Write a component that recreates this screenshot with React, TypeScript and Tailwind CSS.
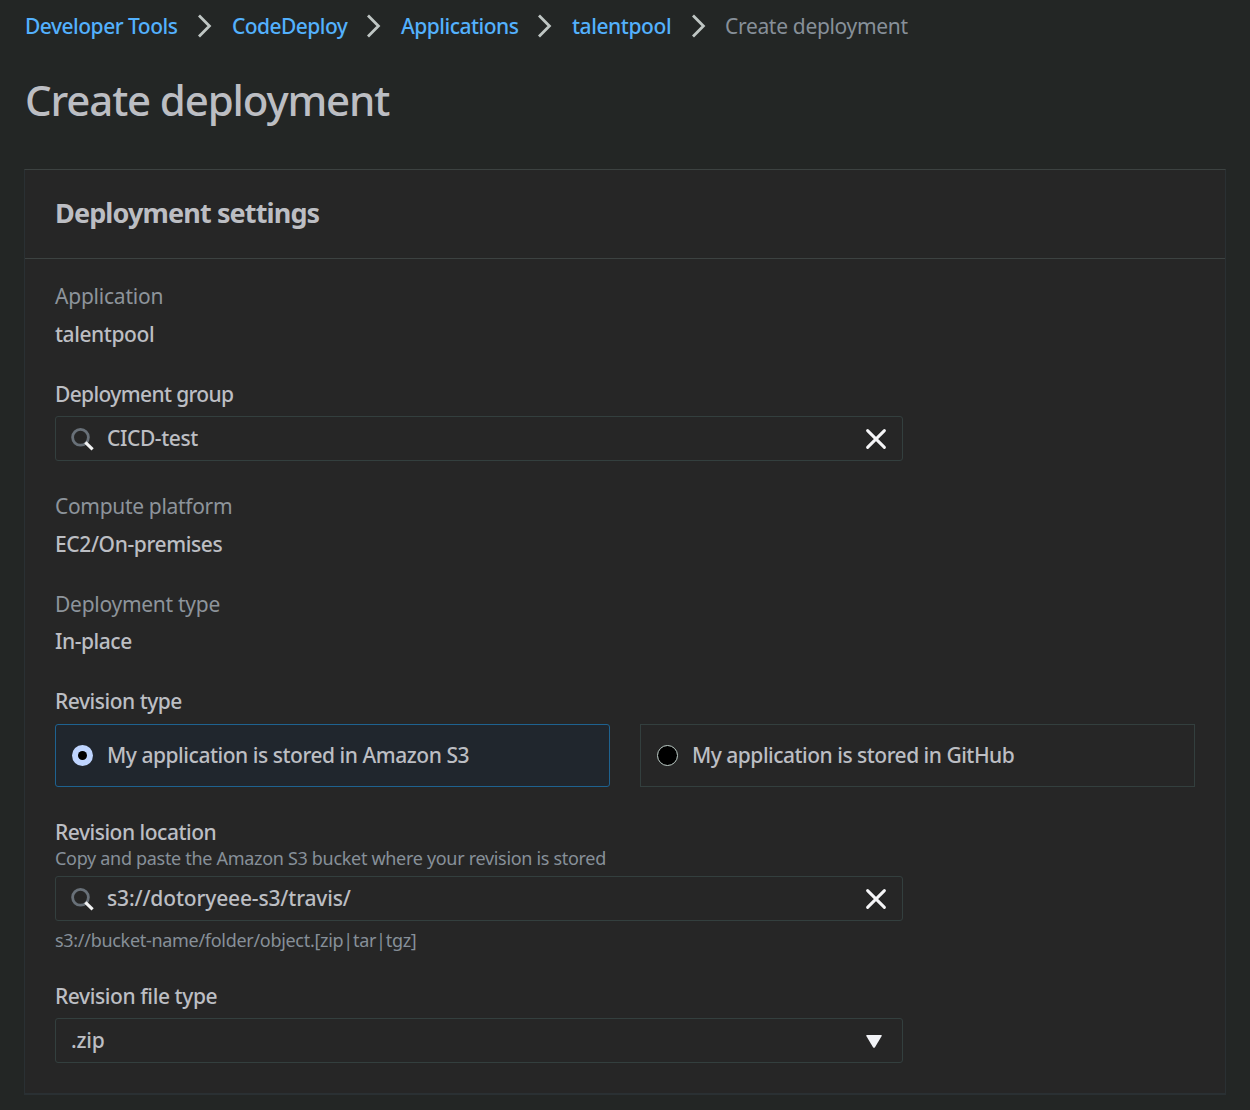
import type { ReactNode } from "react";

function Chevron() {
  return (
    <svg width="16" height="24" viewBox="0 0 16 24" className="shrink-0" fill="none" stroke="#bfc6c4" strokeWidth="2.8">
      <path d="M2 1.6 12.4 12 2 22.4" />
    </svg>
  );
}

function Crumb({ text, className }: { text: string; className: string }) {
  return (
    <li className="mr-[18px] flex items-center">
      <a className={"block shrink-0 whitespace-nowrap pl-px font-medium text-[#53b1fd] " + className}>{text}</a>
      <Chevron />
    </li>
  );
}

function SearchIcon() {
  return (
    <svg width="24" height="24" viewBox="0 0 24 24" className="ml-[15px] shrink-0" fill="none">
      <circle cx="9.5" cy="10.3" r="7.9" stroke="#687078" strokeWidth="2.8" />
      <path d="M14.4 15.4 21.6 22.4" stroke="#f2f3f3" strokeWidth="3.2" />
    </svg>
  );
}

function CloseIcon() {
  return (
    <svg width="22" height="22" viewBox="0 0 22 22" className="mr-[15px] shrink-0" fill="none" stroke="#f5f5f7" strokeWidth="3" strokeLinecap="round">
      <path d="M2.6 2.6 19.4 19.4M19.4 2.6 2.6 19.4" />
    </svg>
  );
}

function Muted({ children, className }: { children: ReactNode; className: string }) {
  return <dt className={"text-[#8d949b] " + className}>{children}</dt>;
}

function Label({ children, className }: { children: ReactNode; className: string }) {
  return <label className={"block font-medium text-[#bcbec3] " + className}>{children}</label>;
}

function SearchInput({ value, className }: { value: string; className: string }) {
  return (
    <div className="flex h-[45px] w-[848px] items-center rounded-[3px] border border-[#333f3e]">
      <SearchIcon />
      <span className={"mb-px ml-3 grow whitespace-nowrap font-medium text-[#bcbec3] " + className}>{value}</span>
      <CloseIcon />
    </div>
  );
}

export default function App() {
  return (
    <main className="h-[1110px] w-[1250px] overflow-hidden bg-[#232625] px-6 pt-[11px] font-['Noto_Sans',sans-serif] text-[21px] leading-[30px]">
      <nav>
        <ol className="flex h-[30px]">
          <Crumb text="Developer Tools" className="w-[173px] tracking-[-0.5px]" />
          <Crumb text="CodeDeploy" className="w-[135px] tracking-[-0.55px]" />
          <Crumb text="Applications" className="w-[137px] tracking-[-0.5px]" />
          <Crumb text="talentpool" className="w-[120px] tracking-[-0.42px]" />
          <li className="whitespace-nowrap tracking-[-0.32px] text-[#879099]">Create deployment</li>
        </ol>
      </nav>
      <h1 className="ml-px mt-[29px] h-[60px] text-[42px] font-medium leading-[60px] tracking-[-1.15px] text-[#bcbec3]">Create deployment</h1>

      <section className="mt-[39px] h-[926px] w-[1202px] border border-b-2 border-[#2a3033] border-t-[#3c4241] bg-[#262626]">
        <header className="h-[89px] border-b border-[#3c4241] pl-[30px]">
          <h2 className="pt-[28px] text-[27px] font-bold leading-[30px] tracking-[-0.87px] text-[#bcbec3]">Deployment settings</h2>
        </header>
        <div className="flex flex-col px-[30px] pt-[22px]">
          <dl>
            <Muted className="tracking-[-0.22px]">Application</Muted>
            <dd className="mt-2 font-medium tracking-[-0.42px] text-[#bcbec3]">talentpool</dd>
          </dl>
          <Label className="mb-[7px] mt-[30px] tracking-[-0.64px]">Deployment group</Label>
          <SearchInput value="CICD-test" className="tracking-[-0.4px]" />
          <dl className="mt-[30px]">
            <Muted className="tracking-[-0.32px]">Compute platform</Muted>
            <dd className="mt-2 font-medium tracking-[-0.38px] text-[#bcbec3]">EC2/On-premises</dd>
          </dl>
          <dl className="mt-[30px]">
            <Muted className="tracking-[-0.27px]">Deployment type</Muted>
            <dd className="mt-[7px] font-medium tracking-[-0.45px] text-[#bcbec3]">In-place</dd>
          </dl>
          <Label className="mb-2 mt-[30px] tracking-[-0.48px]">Revision type</Label>
          <div className="grid grid-cols-2 gap-[30px]">
            <div className="flex h-[63px] items-center rounded-[3px] border border-[#1e6290] bg-[#20262d]">
              <span className="ml-4 flex size-[21px] items-center justify-center rounded-full bg-[#bfd5ff]">
                <span className="size-[9px] rounded-full bg-black" />
              </span>
              <span className="mb-[2px] ml-[14px] whitespace-nowrap font-medium tracking-[-0.46px] text-[#bcbec3]">My application is stored in Amazon S3</span>
            </div>
            <div className="flex h-[63px] items-center border border-[#333f3e]">
              <span className="ml-4 size-[21px] rounded-full border-[1.5px] border-[#bfcfc9] bg-black" />
              <span className="mb-[2px] ml-[14px] whitespace-nowrap font-medium tracking-[-0.5px] text-[#bcbec3]">My application is stored in GitHub</span>
            </div>
          </div>
          <Label className="mt-[30px] tracking-[-0.49px]">Revision location</Label>
          <p className="-mt-px mb-[6px] text-[18px] leading-[24px] tracking-[-0.31px] text-[#879099]">Copy and paste the Amazon S3 bucket where your revision is stored</p>
          <SearchInput value="s3://dotoryeee-s3/travis/" className="tracking-[-0.15px]" />
          <p className="mt-[7px] text-[18px] leading-[24px] tracking-[-0.3px] text-[#879099]">s3://bucket-name/folder/object.[zip|tar|tgz]</p>
          <Label className="mb-[7px] mt-[29px] tracking-[-0.41px]">Revision file type</Label>
          <div className="flex h-[45px] w-[848px] items-center justify-between rounded-[3px] border border-[#333f3e] pl-[15px] pr-5">
            <span className="mb-px font-medium tracking-[-0.2px] text-[#bcbec3]">.zip</span>
            <svg width="16" height="13" viewBox="0 0 16 13" className="mt-px" fill="#f2f3f7">
              <path d="M.8 0h14.4q.9 0 .5.9L9 12.3q-1 1-2 0L.3.9Q-.1 0 .8 0Z" />
            </svg>
          </div>
        </div>
      </section>
    </main>
  );
}
